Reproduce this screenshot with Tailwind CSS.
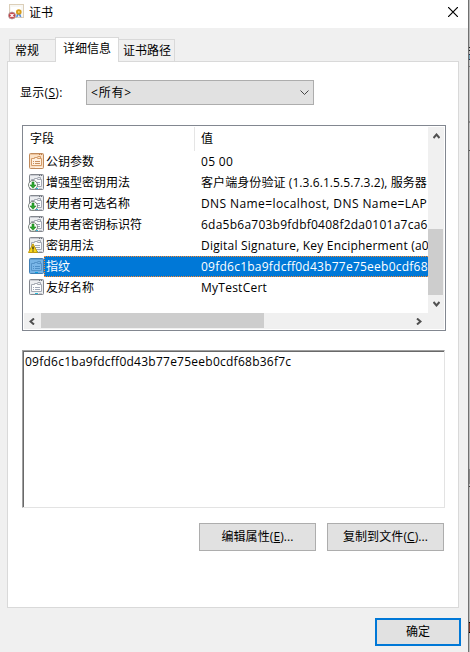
<!DOCTYPE html>
<html lang="zh-CN">

<head>
    <meta charset="UTF-8">
    <meta name="viewport" content="width=device-width, initial-scale=1.0">
    <title>证书</title>
    <script src="https://cdn.jsdelivr.net/npm/@tailwindcss/browser@4"></script>
</head>

<body class="w-[470px] h-[652px] overflow-hidden flex bg-[#f0f0f0] text-black text-[12px] leading-4 font-['Open_Sans','Noto_Sans_CJK_SC',sans-serif]">
    <!-- Shared list icons -->
    <svg class="hidden">
        <symbol id="doc" viewBox="0 0 15 16">
            <rect x=".5" y=".5" width="14" height="15" rx="1" fill="#eceef1" stroke="#83878e" />
            <path d="M1 1.500h13" stroke="#c9ccd2" />
            <path d="M10 1.500h1M12 1.500h1" stroke="#6c7078" />
            <path d="M2.500 5.500h3v-1h3v1h4v7h-10z" fill="#fbfcfd" stroke="#a4a9b3" />
            <path d="M8.500 3.500h3v2" fill="none" stroke="#a4a9b3" />
            <path d="M4 8.500h1M6 8.500h5M4 10.500h1M6 10.500h5" stroke="#a0a8b8" />
            <path d="M6 14.500h3" stroke="#25b8d8" />
            <path d="M10 14.500h3" stroke="#c5c9cf" />
        </symbol>
        <symbol id="doc-orange" viewBox="0 0 15 16">
            <rect x=".5" y=".5" width="14" height="15" rx="1" fill="#fbe2c8" stroke="#c08a5c" />
            <path d="M1 1.500h13" stroke="#efc59c" />
            <path d="M10 1.500h1M12 1.500h1" stroke="#b9794a" />
            <path d="M2.500 5.500h3v-1h3v1h4v7h-10z" fill="#fff0e0" stroke="#d39b68" />
            <path d="M8.500 3.500h3v2" fill="none" stroke="#d39b68" />
            <path d="M4 8.500h1M6 8.500h5M4 10.500h1M6 10.500h5" stroke="#c9905f" />
            <path d="M6 14.500h7" stroke="#fff3e6" />
        </symbol>
        <symbol id="doc-blue" viewBox="0 0 15 16">
            <rect x=".5" y=".5" width="14" height="15" rx="1" fill="#76b3e5" stroke="#427fb4" />
            <path d="M1 1.500h13" stroke="#629fd2" />
            <path d="M2.500 5.500h3v-1h3v1h4v7h-10z" fill="#7ab6e8" stroke="#5593c8" />
            <path d="M8.500 3.500h3v2" fill="none" stroke="#5593c8" />
            <path d="M4 8.500h1M6 8.500h5M4 10.500h1M6 10.500h5" stroke="#4f8fc6" />
            <path d="M6 14.500h3" stroke="#0ba0e0" />
        </symbol>
        <symbol id="arrow" viewBox="0 0 10 10">
            <circle cx="5" cy="5" r="4.500" fill="#fff" stroke="#7d8580" />
            <path d="M4 2h2v3h2L5 8.300 2 5h2z" fill="#2fa52f" stroke="#16851b" stroke-width=".6" />
        </symbol>
        <symbol id="warning" viewBox="0 0 10 10">
            <path d="M5 .8 9.500 9.500H.5z" fill="#fbd81d" stroke="#c39a0c" stroke-linejoin="round" />
            <path d="M5 3.500v3M5 7.500v1" stroke="#222" stroke-width="1.300" />
        </symbol>
    </svg>

    <div class="w-[468px] flex flex-col shrink-0">
        <header class="h-7 bg-white flex items-center pl-2 pr-[10px]">
            <svg class="w-4 h-4 -mt-1 shrink-0" viewBox="0 0 16 16">
                <rect x="1.500" y=".5" width="14" height="13" fill="#f8f7f3" stroke="#dccfb9" />
                <path d="M3 3h10v7H3z" fill="#fff" />
                <path d="m9 9-1 4.500 2-1 1-3zM12 9l1.500 4.500-2-1-1-3z" fill="#4c86dc" />
                <circle cx="10.800" cy="8" r="2.800" fill="#d69c1b" />
                <circle cx="10.800" cy="8" r="1" fill="#f5d77a" />
                <circle cx="4" cy="11.500" r="3.500" fill="#c43d42" stroke="#b0a4a4" stroke-width=".8" />
                <path d="m2.500 10 3 3m0-3-3 3" stroke="#fff" stroke-width="1.200" />
            </svg>
            <h1 class="ml-[5px] -mt-[3px]">证书</h1>
            <svg class="ml-auto -mt-1 w-[10px] h-[10px]" viewBox="0 0 10 10" fill="none" stroke="#000" stroke-width="1.200">
                <path d="m0 0 10 10M10 0 0 10" />
            </svg>
        </header>

        <nav class="h-[33px] pl-[9px] flex items-end shrink-0">
            <div class="w-[46px] h-[22px] border border-r-0 border-b-0 border-[#d9d9d9] pl-[5px] pt-[3px]">常规</div>
            <div class="relative z-10 w-16 h-[25px] -mb-px border border-b-0 border-[#d9d9d9] bg-white pl-[7px] pt-[3px]">详细信息</div>
            <div class="w-14 h-[22px] border border-l-0 border-b-0 border-[#d9d9d9] pl-1 pt-[3px]">证书路径</div>
        </nav>

        <main class="ml-[7px] w-[452px] h-[547px] shrink-0 bg-white border border-[#d9d9d9] pl-[14px] pt-[18px]">
            <div class="flex items-center h-[25px]">
                <label class="w-16 -ml-[2px] tracking-[.3px]">显示(<u>S</u>):</label>
                <div class="ml-[2px] w-[228px] h-[25px] bg-[#e1e1e1] border border-[#adadad] flex items-center justify-between px-1">
                    <span class="tracking-[.8px]">&lt;所有&gt;</span>
                    <svg class="w-[9px] h-[5px]" viewBox="0 0 9 5" fill="none" stroke="#444">
                        <path d="m.5.500 4 4 4-4" />
                    </svg>
                </div>
            </div>

            <section class="mt-5 w-[424px] h-[206px] border border-[#828790] p-px flex flex-col">
                <div class="flex h-[186px]">
                    <div class="w-[404px] overflow-hidden whitespace-nowrap">
                        <div class="flex h-6">
                            <div class="w-[171px] border-r border-[#e5e5e5] pl-[6px] pt-1">字段</div>
                            <div class="pl-[6px] pt-1">值</div>
                        </div>
                        <div class="flex items-center h-[21px]">
                            <div class="w-[171px] h-full shrink-0 flex items-center pl-[5px] gap-[2px]">
                                <svg class="w-[15px] h-4 mb-px"><use href="#doc-orange" /></svg><span>公钥参数</span>
                            </div>
                            <span class="pl-[6px] tracking-[.3px]">05 00</span>
                        </div>
                        <div class="flex items-center h-[21px]">
                            <div class="w-[171px] h-full shrink-0 flex items-center pl-[5px] gap-[2px]">
                                <svg class="w-[15px] h-4 mb-px overflow-visible"><use href="#doc" /><use href="#arrow" x="-1" y="6" width="10" height="10" /></svg><span>增强型密钥用法</span>
                            </div>
                            <span class="pl-[6px] tracking-[.08px]">客户端身份验证 (1.3.6.1.5.5.7.3.2), 服务器</span>
                        </div>
                        <div class="flex items-center h-[21px]">
                            <div class="w-[171px] h-full shrink-0 flex items-center pl-[5px] gap-[2px]">
                                <svg class="w-[15px] h-4 mb-px overflow-visible"><use href="#doc" /><use href="#arrow" x="-1" y="6" width="10" height="10" /></svg><span>使用者可选名称</span>
                            </div>
                            <span class="pl-[6px] tracking-[.4px]">DNS Name=localhost, DNS Name=LAP</span>
                        </div>
                        <div class="flex items-center h-[21px]">
                            <div class="w-[171px] h-full shrink-0 flex items-center pl-[5px] gap-[2px]">
                                <svg class="w-[15px] h-4 mb-px overflow-visible"><use href="#doc" /><use href="#arrow" x="-1" y="6" width="10" height="10" /></svg><span>使用者密钥标识符</span>
                            </div>
                            <span class="pl-[6px] tracking-[.24px]">6da5b6a703b9fdbf0408f2da0101a7ca6</span>
                        </div>
                        <div class="flex items-center h-[21px]">
                            <div class="w-[171px] h-full shrink-0 flex items-center pl-[5px] gap-[2px]">
                                <svg class="w-[15px] h-4 mb-px overflow-visible"><use href="#doc" /><use href="#warning" x="-1" y="6" width="10" height="10" /></svg><span>密钥用法</span>
                            </div>
                            <span class="pl-[6px] tracking-[.2px]">Digital Signature, Key Encipherment (a0</span>
                        </div>
                        <div class="flex items-center h-[21px]">
                            <svg class="ml-[5px] w-[15px] h-4 mb-px shrink-0"><use href="#doc-blue" /></svg>
                            <div class="flex items-center w-[390px] shrink-0 h-[21px] bg-[#0078d7] border border-dotted border-[#ff8728] text-white">
                                <span class="w-[150px] pl-px shrink-0">指纹</span>
                                <span class="pl-[6px] tracking-[.24px]">09fd6c1ba9fdcff0d43b77e75eeb0cdf68</span>
                            </div>
                        </div>
                        <div class="flex items-center h-[21px]">
                            <div class="w-[171px] h-full shrink-0 flex items-center pl-[5px] gap-[2px]">
                                <svg class="w-[15px] h-4 mb-px"><use href="#doc" /></svg><span>友好名称</span>
                            </div>
                            <span class="pl-[6px] tracking-[.25px]">MyTestCert</span>
                        </div>
                    </div>
                    <div class="w-4 bg-[#f0f0f0] flex flex-col items-center pt-[6px] pb-[6px]">
                        <svg class="w-[7px] h-[6px]" viewBox="0 0 7 6" fill="none" stroke="#505050" stroke-width="2">
                            <path d="m.5 5 3-3.500 3 3.500" />
                        </svg>
                        <div class="mt-[90px] w-[15px] h-[66px] bg-[#cdcdcd] self-start"></div>
                        <svg class="mt-[6px] w-[7px] h-[6px]" viewBox="0 0 7 6" fill="none" stroke="#505050" stroke-width="2">
                            <path d="m.5 1 3 3.500L6.500 1" />
                        </svg>
                    </div>
                </div>
                <div class="h-4 bg-[#f0f0f0] flex items-center">
                    <svg class="ml-[5px] w-[6px] h-[7px]" viewBox="0 0 6 7" fill="none" stroke="#505050" stroke-width="2">
                        <path d="m5 .5-3.500 3 3.500 3" />
                    </svg>
                    <div class="ml-[6px] w-[223px] h-[15px] bg-[#cdcdcd] self-start"></div>
                    <svg class="ml-[152px] w-[6px] h-[7px]" viewBox="0 0 6 7" fill="none" stroke="#505050" stroke-width="2">
                        <path d="m1 .5 3.500 3L1 6.500" />
                    </svg>
                </div>
            </section>

            <div class="mt-[19px] w-[423px] h-[158px] border border-t-[#a0a0a0] border-l-[#a0a0a0] border-r-[#e3e3e3] border-b-[#e3e3e3]">
                <div class="h-full border-t border-l border-[#696969] pl-px pt-[2px] tracking-[.25px]">09fd6c1ba9fdcff0d43b77e75eeb0cdf68b36f7c</div>
            </div>

            <div class="mt-[15px] pl-[177px] flex gap-[11px]">
                <button class="w-[117px] h-7 bg-[#e1e1e1] border border-[#adadad] tracking-[.1px]">编辑属性(<u>E</u>)...</button>
                <button class="w-[117px] h-7 bg-[#e1e1e1] border border-[#adadad] tracking-[.1px]">复制到文件(<u>C</u>)...</button>
            </div>
        </main>

        <footer class="pt-[10px] pl-[375px]">
            <button class="w-[86px] h-7 bg-[#e1e1e1] border-2 border-[#0078d7]">确定</button>
        </footer>
    </div>

    <!-- Strip of the window behind the dialog -->
    <div class="w-px h-full bg-[#707070]"></div>
    <div class="w-px h-full flex flex-col bg-[#bcbcbc]">
        <div class="mt-[47px] h-px bg-[#222]"></div>
        <div class="mt-[2px] h-px bg-[#222]"></div>
        <div class="mt-[3px] h-[6px] bg-[#6fa3b5] border-y border-[#253050]"></div>
        <div class="mt-[6px] h-px bg-[#777]"></div>
        <div class="mt-[54px] h-[2px] bg-[#888]"></div>
        <div class="mt-[27px] h-px bg-[#555]"></div>
        <div class="mt-[318px] h-[15px] bg-[#888]"></div>
        <div class="mt-[2px] h-px bg-[#444]"></div>
        <div class="mt-[135px] h-[11px] bg-[#843a2a] border-y border-black"></div>
    </div>
</body>

</html>
